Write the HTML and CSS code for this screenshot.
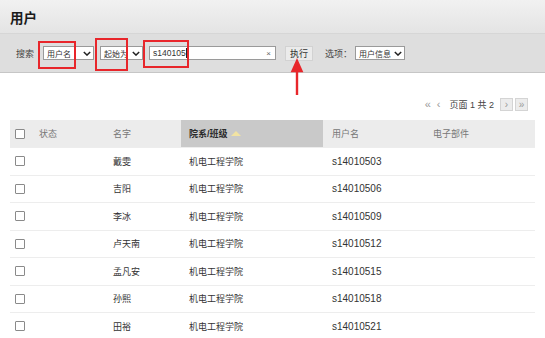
FILE: index.html
```html
<!DOCTYPE html>
<html lang="zh-CN">
<head>
    <meta charset="UTF-8">
    <title>用户</title>
    <link rel="stylesheet" href="styles.css">
</head>
<body>
    <div class="page">
        <div class="title-bar">
            <h1>用户</h1>
        </div>

        <div class="search-bar">
            <span class="label">搜索</span>
            <div class="select sel-field">
                <span>用户名</span>
                <svg class="chev" viewBox="0 0 10 6"><path d="M1 1l4 4 4-4" /></svg>
            </div>
            <div class="select sel-op">
                <span>起始为</span>
                <svg class="chev" viewBox="0 0 10 6"><path d="M1 1l4 4 4-4" /></svg>
            </div>
            <div class="text-input">
                <span>s140105<i class="caret"></i></span>
                <span class="clear">×</span>
            </div>
            <button class="run-btn">执行</button>
            <span class="label opt-label">选项：</span>
            <div class="select sel-opt">
                <span>用户信息</span>
                <svg class="chev" viewBox="0 0 10 6"><path d="M1 1l4 4 4-4" /></svg>
            </div>

            <!-- annotations drawn on top of the screenshot -->
            <div class="mark mark-1"></div>
            <div class="mark mark-2"></div>
            <div class="mark mark-3"></div>
            <svg class="arrow" viewBox="0 0 10 34"><path d="M5 34V8" /><polygon points="5,0 0.5,10 9.5,10" /></svg>
        </div>

        <div class="pager">
            <span class="pg-link">«</span>
            <span class="pg-link">‹</span>
            <span class="pg-info">页面 1 共 2</span>
            <span class="pg-btn">›</span>
            <span class="pg-btn">»</span>
        </div>

        <div class="grid">
            <div class="row head">
                <div class="cell c-check"><span class="box"></span></div>
                <div class="cell">状态</div>
                <div class="cell">名字</div>
                <div class="cell c-dept sorted">院系/班级 <span class="tri"></span></div>
                <div class="cell c-user">用户名</div>
                <div class="cell">电子部件</div>
            </div>
        </div>
        <div class="grid" id="rows"></div>
    </div>

    <script>
        const users = [
            ['戴雯', 's14010503'],
            ['吉阳', 's14010506'],
            ['李冰', 's14010509'],
            ['卢天南', 's14010512'],
            ['孟凡安', 's14010515'],
            ['孙熙', 's14010518'],
            ['田裕', 's14010521']
        ];

        const rowsEl = document.getElementById('rows');

        users.forEach(u => {
            const row = document.createElement('div');
            row.className = 'row';
            row.innerHTML =
                '<div class="cell c-check"><span class="box"></span></div>' +
                '<div class="cell"></div>' +
                '<div class="cell">' + u[0] + '</div>' +
                '<div class="cell c-dept">机电工程学院</div>' +
                '<div class="cell c-user num">' + u[1] + '</div>' +
                '<div class="cell"></div>';
            rowsEl.appendChild(row);
        });
    </script>
</body>
</html>
```

FILE: styles.css
```css
* {
    margin: 0;
    padding: 0;
    box-sizing: border-box;
}

body {
    background: #fff;
    font-family: 'Liberation Sans', 'Noto Sans CJK SC', sans-serif;
    font-size: 9px;
    color: #333;
    overflow: hidden;
}

.page {
    width: 545px;
}

.title-bar {
    height: 34px;
    padding-left: 10px;
    display: flex;
    align-items: center;
    background: linear-gradient(#f1f1f1, #e4e4e4);
    border-bottom: 1px solid #d6d6d6;
}

h1 {
    font-size: 13.5px;
    font-weight: bold;
    color: #1a1a1a;
}

.search-bar {
    position: relative;
    height: 39px;
    padding-left: 16px;
    display: flex;
    align-items: center;
    background: #dedede;
    border-bottom: 1px solid #c6c6c6;
}

.label {
    color: #444;
}

.select {
    height: 14px;
    display: flex;
    align-items: center;
    justify-content: space-between;
    background: #fff;
    border: 1px solid #9a9a9a;
    padding: 0 2px 0 3px;
    font-size: 8px;
    color: #333;
    white-space: nowrap;
}

.chev {
    flex-shrink: 0;
    width: 8px;
    height: 5px;
    fill: none;
    stroke: #222;
    stroke-width: 1.8;
}

.sel-field {
    width: 51px;
    margin-left: 9px;
}

.sel-op {
    width: 43px;
    margin-left: 6px;
}

.text-input {
    width: 127px;
    height: 14px;
    margin-left: 6px;
    display: flex;
    align-items: center;
    justify-content: space-between;
    padding: 0 4px 0 3px;
    background: #fff;
    border: 1px solid #9a9a9a;
    font-size: 8.5px;
}

.caret {
    display: inline-block;
    width: 1px;
    height: 10px;
    background: #222;
    vertical-align: middle;
}

.clear {
    color: #666;
    font-size: 8px;
}

.run-btn {
    width: 28px;
    height: 15px;
    margin-left: 9px;
    font-family: inherit;
    font-size: 9px;
    color: #333;
    background: #ebebeb;
    border: 1px solid #d2d2d2;
}

.opt-label {
    margin-left: 12px;
}

.sel-opt {
    width: 50px;
    margin-left: 3px;
}

.mark {
    position: absolute;
    border: 2px solid #e8262b;
}

.mark-1 {
    left: 38px;
    top: 7px;
    width: 38px;
    height: 28px;
}

.mark-2 {
    left: 95px;
    top: 4px;
    width: 33px;
    height: 33px;
}

.mark-3 {
    left: 143px;
    top: 6px;
    width: 46px;
    height: 28px;
}

.arrow {
    position: absolute;
    left: 292px;
    top: 27px;
    width: 10px;
    height: 34px;
    fill: #e8262b;
    stroke: #e8262b;
    stroke-width: 2.4;
    overflow: visible;
}

.pager {
    height: 16px;
    margin-top: 23px;
    padding-right: 17px;
    display: flex;
    align-items: center;
    justify-content: flex-end;
    gap: 6px;
}

.pg-link {
    color: #999;
    font-size: 11px;
}

.pg-info {
    margin-left: 3px;
    color: #444;
}

.pg-btn {
    width: 13px;
    height: 13px;
    display: flex;
    align-items: center;
    justify-content: center;
    color: #999;
    font-size: 10px;
    background: #ececec;
    border: 1px solid #d4d4d4;
    margin-left: -4px;
}

.pg-info + .pg-btn {
    margin-left: 0;
}

.grid {
    margin: 0 10px;
}

.row {
    display: grid;
    grid-template-columns: 23px 74px 74px 142px 104px 1fr;
    height: 27.5px;
    border-top: 1px solid #ededed;
}

.row.head {
    margin-top: 8px;
    height: 27px;
    border-top: none;
    background: #ececec;
    color: #777;
}

.cell {
    display: flex;
    align-items: center;
    padding-left: 6px;
    white-space: nowrap;
}

.c-check {
    padding-left: 5px;
}

.c-dept {
    padding-left: 8px;
}

.c-user {
    padding-left: 9px;
}

.num {
    font-size: 10px;
}

.sorted {
    background: #c9c9c9;
    color: #2a2a2a;
    font-weight: bold;
}

.tri {
    margin-left: 3px;
    width: 0;
    height: 0;
    border-left: 5px solid transparent;
    border-right: 5px solid transparent;
    border-bottom: 5px solid #f2e3a2;
}

.box {
    width: 10px;
    height: 10px;
    border: 1px solid #8a8a8a;
    border-radius: 1px;
    background: #fff;
}
```
